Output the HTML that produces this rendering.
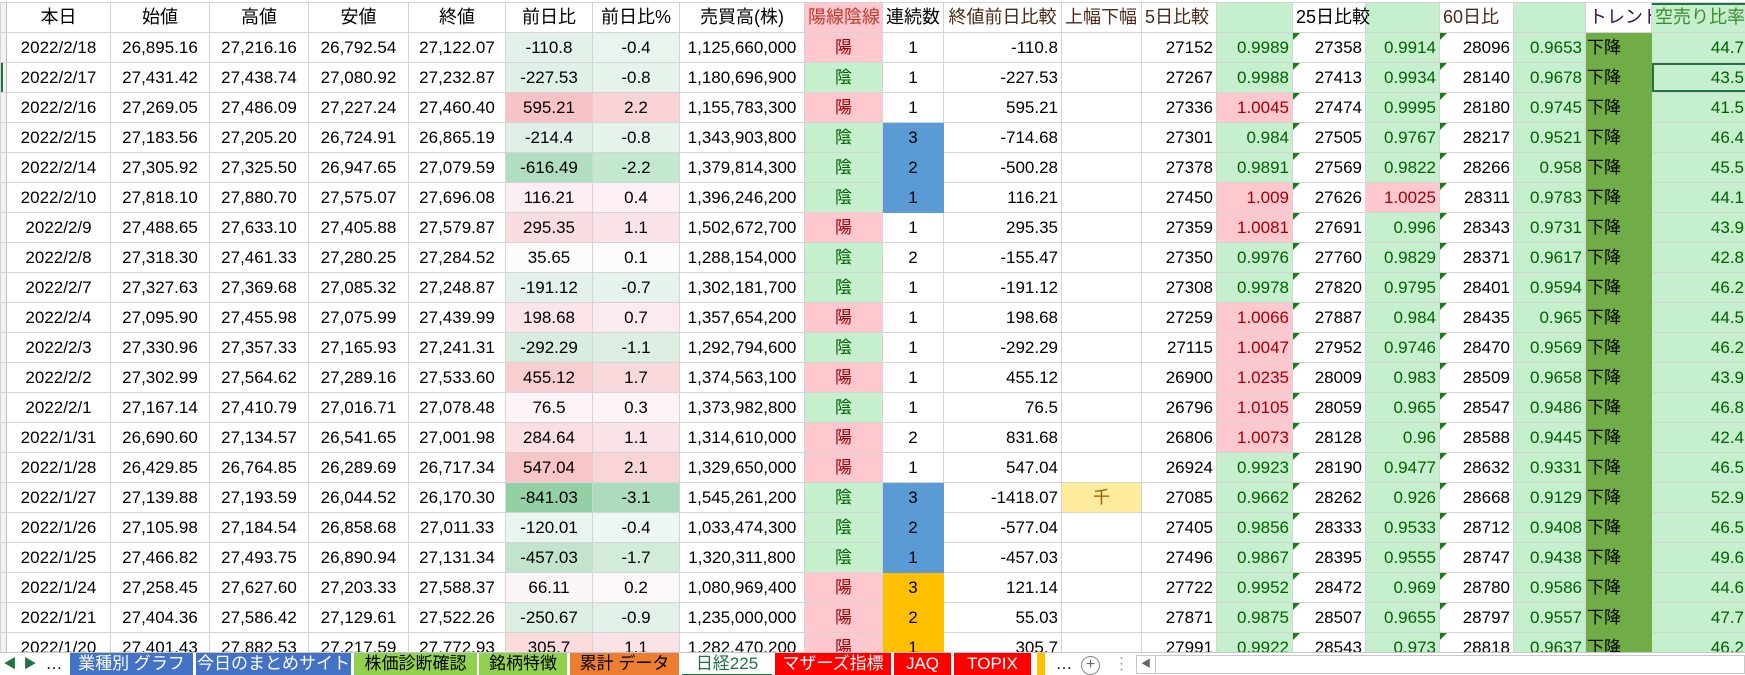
<!DOCTYPE html>
<html><head><meta charset="utf-8">
<style>
html,body{margin:0;padding:0;background:#fff;overflow:hidden;width:1745px;height:675px}
body{position:relative;font-family:"Liberation Sans","Noto Sans CJK JP",sans-serif;color:#000}
table{position:absolute;left:0;top:2px;border-collapse:collapse;table-layout:fixed;width:1747px}
td{border:1px solid #d4d4d4;height:29px;padding:0 3px;font-size:17px;text-align:center;white-space:nowrap;overflow:hidden;line-height:29px}
tr.h td{font-size:18px;height:29px}
td.x{background:#f2f2f2;border-right:1px solid #bdbdbd;padding:0}
.r{text-align:right}.l{text-align:left}
.p{background:#FFC7CE;color:#9C0006}
.g{background:#C6EFCE;color:#006100}
.b{background:#5B9BD5;border-color:#5B9BD5}
.o{background:#FFC000;border-color:#FFC000}
.tr{background:#70AD47;text-align:left;padding-left:1px;border-color:#70AD47}
.y{background:#FFEB9C;color:#9C5700}
.t{position:relative}
.t::before{content:"";position:absolute;left:0;top:0;border-top:7px solid #1a7d1a;border-right:7px solid transparent}
.br{color:#4a2a18}
.sel{box-shadow:inset 0 0 0 2px #217346}
#tabs{position:absolute;left:0;top:652px;width:1745px;height:23px;background:#fff;border-top:1px solid #c8c8c8}
.tab{position:absolute;top:0;height:23px;line-height:22px;font-size:17px;text-align:center;white-space:nowrap;overflow:hidden}
</style></head><body>
<table>
<colgroup><col style="width:6px"><col style="width:104px"><col style="width:99px"><col style="width:99px"><col style="width:100px"><col style="width:97px"><col style="width:87px"><col style="width:87px"><col style="width:125px"><col style="width:78px"><col style="width:61px"><col style="width:118px"><col style="width:80px"><col style="width:75px"><col style="width:76px"><col style="width:73px"><col style="width:74px"><col style="width:74px"><col style="width:72px"><col style="width:66px"><col style="width:96px"></colgroup>
<tr class="h"><td class="x"></td><td>本日</td><td>始値</td><td>高値</td><td>安値</td><td>終値</td><td>前日比</td><td>前日比%</td><td>売買高(株)</td><td class="p" style="color:#C0392B">陽線陰線</td><td>連続数</td><td class="br">終値前日比較</td><td class="br l">上幅下幅</td><td class="br l">5日比較</td><td class="g"></td><td class="l" style="overflow:visible">25日比較</td><td class="g"></td><td class="br l">60日比</td><td class="g"></td><td class="l" style="color:#3b1050">トレンド</td><td class="g l" style="color:#3c8a2e;box-shadow:inset 0 2px 0 #217346">空売り比率</td></tr>
<tr><td class="x"></td><td>2022/2/18</td><td>26,895.16</td><td>27,216.16</td><td>26,792.54</td><td>27,122.07</td><td style="background:#E3F1E8">-110.8</td><td style="background:#E8F4EC">-0.4</td><td>1,125,660,000</td><td class="p">陽</td><td>1</td><td class="r">-110.8</td><td></td><td class="r">27152</td><td class="g r">0.9989</td><td class="r t">27358</td><td class="g r">0.9914</td><td class="r t">28096</td><td class="g r">0.9653</td><td class="tr">下降</td><td class="g r">44.7</td></tr>
<tr><td class="x" style="box-shadow:inset 2px 0 0 #217346"></td><td>2022/2/17</td><td>27,431.42</td><td>27,438.74</td><td>27,080.92</td><td>27,232.87</td><td style="background:#E0F0E6">-227.53</td><td style="background:#E5F3EA">-0.8</td><td>1,180,696,900</td><td class="g">陰</td><td>1</td><td class="r">-227.53</td><td></td><td class="r">27267</td><td class="g r">0.9988</td><td class="r t">27413</td><td class="g r">0.9934</td><td class="r t">28140</td><td class="g r">0.9678</td><td class="tr">下降</td><td class="g r sel">43.5</td></tr>
<tr><td class="x"></td><td>2022/2/16</td><td>27,269.05</td><td>27,486.09</td><td>27,227.24</td><td>27,460.40</td><td style="background:#F8C3C6">595.21</td><td style="background:#F9D3D6">2.2</td><td>1,155,783,300</td><td class="p">陽</td><td>1</td><td class="r">595.21</td><td></td><td class="r">27336</td><td class="p r">1.0045</td><td class="r t">27474</td><td class="g r">0.9995</td><td class="r t">28180</td><td class="g r">0.9745</td><td class="tr">下降</td><td class="g r">41.5</td></tr>
<tr><td class="x"></td><td>2022/2/15</td><td>27,183.56</td><td>27,205.20</td><td>26,724.91</td><td>26,865.19</td><td style="background:#E1F0E7">-214.4</td><td style="background:#E5F3EA">-0.8</td><td>1,343,903,800</td><td class="g">陰</td><td class="b">3</td><td class="r">-714.68</td><td></td><td class="r">27301</td><td class="g r">0.984</td><td class="r t">27505</td><td class="g r">0.9767</td><td class="r t">28217</td><td class="g r">0.9521</td><td class="tr">下降</td><td class="g r">46.4</td></tr>
<tr><td class="x"></td><td>2022/2/14</td><td>27,305.92</td><td>27,325.50</td><td>26,947.65</td><td>27,079.59</td><td style="background:#B1DEC0">-616.49</td><td style="background:#C4E7CF">-2.2</td><td>1,379,814,300</td><td class="g">陰</td><td class="b">2</td><td class="r">-500.28</td><td></td><td class="r">27378</td><td class="g r">0.9891</td><td class="r t">27569</td><td class="g r">0.9822</td><td class="r t">28266</td><td class="g r">0.958</td><td class="tr">下降</td><td class="g r">45.5</td></tr>
<tr><td class="x"></td><td>2022/2/10</td><td>27,818.10</td><td>27,880.70</td><td>27,575.07</td><td>27,696.08</td><td style="background:#FCEFF1">116.21</td><td style="background:#FCF0F2">0.4</td><td>1,396,246,200</td><td class="g">陰</td><td class="b">1</td><td class="r">116.21</td><td></td><td class="r">27450</td><td class="p r">1.009</td><td class="r t">27626</td><td class="p r">1.0025</td><td class="r t">28311</td><td class="g r">0.9783</td><td class="tr">下降</td><td class="g r">44.1</td></tr>
<tr><td class="x"></td><td>2022/2/9</td><td>27,488.65</td><td>27,633.10</td><td>27,405.88</td><td>27,579.87</td><td style="background:#FADDE0">295.35</td><td style="background:#FAE3E6">1.1</td><td>1,502,672,700</td><td class="p">陽</td><td>1</td><td class="r">295.35</td><td></td><td class="r">27359</td><td class="p r">1.0081</td><td class="r t">27691</td><td class="g r">0.996</td><td class="r t">28343</td><td class="g r">0.9731</td><td class="tr">下降</td><td class="g r">43.9</td></tr>
<tr><td class="x"></td><td>2022/2/8</td><td>27,318.30</td><td>27,461.33</td><td>27,280.25</td><td>27,284.52</td><td style="background:#FDFAFC">35.65</td><td style="background:#FDFAFC">0.1</td><td>1,288,154,000</td><td class="g">陰</td><td>2</td><td class="r">-155.47</td><td></td><td class="r">27350</td><td class="g r">0.9976</td><td class="r t">27760</td><td class="g r">0.9829</td><td class="r t">28371</td><td class="g r">0.9617</td><td class="tr">下降</td><td class="g r">42.8</td></tr>
<tr><td class="x"></td><td>2022/2/7</td><td>27,327.63</td><td>27,369.68</td><td>27,085.32</td><td>27,248.87</td><td style="background:#E3F1E8">-191.12</td><td style="background:#E6F3EA">-0.7</td><td>1,302,181,700</td><td class="g">陰</td><td>1</td><td class="r">-191.12</td><td></td><td class="r">27308</td><td class="g r">0.9978</td><td class="r t">27820</td><td class="g r">0.9795</td><td class="r t">28401</td><td class="g r">0.9594</td><td class="tr">下降</td><td class="g r">46.2</td></tr>
<tr><td class="x"></td><td>2022/2/4</td><td>27,095.90</td><td>27,455.98</td><td>27,075.99</td><td>27,439.99</td><td style="background:#FBE5E8">198.68</td><td style="background:#FBEBEE">0.7</td><td>1,357,654,200</td><td class="p">陽</td><td>1</td><td class="r">198.68</td><td></td><td class="r">27259</td><td class="p r">1.0066</td><td class="r t">27887</td><td class="g r">0.984</td><td class="r t">28435</td><td class="g r">0.965</td><td class="tr">下降</td><td class="g r">44.5</td></tr>
<tr><td class="x"></td><td>2022/2/3</td><td>27,330.96</td><td>27,357.33</td><td>27,165.93</td><td>27,241.31</td><td style="background:#D8EDDF">-292.29</td><td style="background:#DDEFE3">-1.1</td><td>1,292,794,600</td><td class="g">陰</td><td>1</td><td class="r">-292.29</td><td></td><td class="r">27115</td><td class="p r">1.0047</td><td class="r t">27952</td><td class="g r">0.9746</td><td class="r t">28470</td><td class="g r">0.9569</td><td class="tr">下降</td><td class="g r">46.2</td></tr>
<tr><td class="x"></td><td>2022/2/2</td><td>27,302.99</td><td>27,564.62</td><td>27,289.16</td><td>27,533.60</td><td style="background:#F9CED1">455.12</td><td style="background:#FAD9DC">1.7</td><td>1,374,563,100</td><td class="p">陽</td><td>1</td><td class="r">455.12</td><td></td><td class="r">26900</td><td class="p r">1.0235</td><td class="r t">28009</td><td class="g r">0.983</td><td class="r t">28509</td><td class="g r">0.9658</td><td class="tr">下降</td><td class="g r">43.9</td></tr>
<tr><td class="x"></td><td>2022/2/1</td><td>27,167.14</td><td>27,410.79</td><td>27,016.71</td><td>27,078.48</td><td style="background:#FCF4F6">76.5</td><td style="background:#FCF4F6">0.3</td><td>1,373,982,800</td><td class="g">陰</td><td>1</td><td class="r">76.5</td><td></td><td class="r">26796</td><td class="p r">1.0105</td><td class="r t">28059</td><td class="g r">0.965</td><td class="r t">28547</td><td class="g r">0.9486</td><td class="tr">下降</td><td class="g r">46.8</td></tr>
<tr><td class="x"></td><td>2022/1/31</td><td>26,690.60</td><td>27,134.57</td><td>26,541.65</td><td>27,001.98</td><td style="background:#FADEE1">284.64</td><td style="background:#FAE3E6">1.1</td><td>1,314,610,000</td><td class="p">陽</td><td>2</td><td class="r">831.68</td><td></td><td class="r">26806</td><td class="p r">1.0073</td><td class="r t">28128</td><td class="g r">0.96</td><td class="r t">28588</td><td class="g r">0.9445</td><td class="tr">下降</td><td class="g r">42.4</td></tr>
<tr><td class="x"></td><td>2022/1/28</td><td>26,429.85</td><td>26,764.85</td><td>26,289.69</td><td>26,717.34</td><td style="background:#F8C6C9">547.04</td><td style="background:#F9D5D8">2.1</td><td>1,329,650,000</td><td class="p">陽</td><td>1</td><td class="r">547.04</td><td></td><td class="r">26924</td><td class="g r">0.9923</td><td class="r t">28190</td><td class="g r">0.9477</td><td class="r t">28632</td><td class="g r">0.9331</td><td class="tr">下降</td><td class="g r">46.5</td></tr>
<tr><td class="x"></td><td>2022/1/27</td><td>27,139.88</td><td>27,193.59</td><td>26,044.52</td><td>26,170.30</td><td style="background:#93D0A6">-841.03</td><td style="background:#ADDBBD">-3.1</td><td>1,545,261,200</td><td class="g">陰</td><td class="b">3</td><td class="r">-1418.07</td><td class="y">千</td><td class="r">27085</td><td class="g r">0.9662</td><td class="r t">28262</td><td class="g r">0.926</td><td class="r t">28668</td><td class="g r">0.9129</td><td class="tr">下降</td><td class="g r">52.9</td></tr>
<tr><td class="x"></td><td>2022/1/26</td><td>27,105.98</td><td>27,184.54</td><td>26,858.68</td><td>27,011.33</td><td style="background:#EAF5EF">-120.01</td><td style="background:#EDF6F1">-0.4</td><td>1,033,474,300</td><td class="g">陰</td><td class="b">2</td><td class="r">-577.04</td><td></td><td class="r">27405</td><td class="g r">0.9856</td><td class="r t">28333</td><td class="g r">0.9533</td><td class="r t">28712</td><td class="g r">0.9408</td><td class="tr">下降</td><td class="g r">46.5</td></tr>
<tr><td class="x"></td><td>2022/1/25</td><td>27,466.82</td><td>27,493.75</td><td>26,890.94</td><td>27,131.34</td><td style="background:#C2E4CD">-457.03</td><td style="background:#D3EBDB">-1.7</td><td>1,320,311,800</td><td class="g">陰</td><td class="b">1</td><td class="r">-457.03</td><td></td><td class="r">27496</td><td class="g r">0.9867</td><td class="r t">28395</td><td class="g r">0.9555</td><td class="r t">28747</td><td class="g r">0.9438</td><td class="tr">下降</td><td class="g r">49.6</td></tr>
<tr><td class="x"></td><td>2022/1/24</td><td>27,258.45</td><td>27,627.60</td><td>27,203.33</td><td>27,588.37</td><td style="background:#FCF5F7">66.11</td><td style="background:#FCF7F9">0.2</td><td>1,080,969,400</td><td class="p">陽</td><td class="o">3</td><td class="r">121.14</td><td></td><td class="r">27722</td><td class="g r">0.9952</td><td class="r t">28472</td><td class="g r">0.969</td><td class="r t">28780</td><td class="g r">0.9586</td><td class="tr">下降</td><td class="g r">44.6</td></tr>
<tr><td class="x"></td><td>2022/1/21</td><td>27,404.36</td><td>27,586.42</td><td>27,129.61</td><td>27,522.26</td><td style="background:#DCEFE2">-250.67</td><td style="background:#E2F1E7">-0.9</td><td>1,235,000,000</td><td class="p">陽</td><td class="o">2</td><td class="r">55.03</td><td></td><td class="r">27871</td><td class="g r">0.9875</td><td class="r t">28507</td><td class="g r">0.9655</td><td class="r t">28797</td><td class="g r">0.9557</td><td class="tr">下降</td><td class="g r">47.7</td></tr>
<tr><td class="x"></td><td>2022/1/20</td><td>27,401.43</td><td>27,882.53</td><td>27,217.59</td><td>27,772.93</td><td style="background:#FADCDF">305.7</td><td style="background:#FAE3E6">1.1</td><td>1,282,470,200</td><td class="p">陽</td><td class="o">1</td><td class="r">305.7</td><td></td><td class="r">27991</td><td class="g r">0.9922</td><td class="r t">28543</td><td class="g r">0.973</td><td class="r t">28818</td><td class="g r">0.9637</td><td class="tr">下降</td><td class="g r">46.2</td></tr>
</table>
<div id="tabs">
<div class="tab" style="left:0;width:20px;color:#217346;font-size:13px">◀</div>
<div class="tab" style="left:20px;width:20px;color:#217346;font-size:13px">▶</div>
<div class="tab" style="left:42px;width:24px">…</div>
<div class="tab" style="left:70px;width:123px;background:#4472C4;color:#fff">業種別 グラフ</div>
<div class="tab" style="left:196px;width:155px;background:#4472C4;color:#fff">今日のまとめサイト</div>
<div class="tab" style="left:354px;width:123px;background:#92D050">株価診断確認</div>
<div class="tab" style="left:479px;width:88px;background:#92D050">銘柄特徴</div>
<div class="tab" style="left:570px;width:109px;background:#ED7D31">累計 データ</div>
<div class="tab" style="left:682px;width:90px;background:#fff;color:#217346;border-bottom:2px solid #217346;box-sizing:border-box;height:23px">日経225</div>
<div class="tab" style="left:775px;width:116px;background:#FF0000;color:#fff">マザーズ指標</div>
<div class="tab" style="left:894px;width:57px;background:#FF0000;color:#fff">JAQ</div>
<div class="tab" style="left:954px;width:77px;background:#FF0000;color:#fff">TOPIX</div>
<div class="tab" style="left:1037px;width:8px;background:#FFC000"></div>
<div class="tab" style="left:1052px;width:24px">…</div>
<div class="tab" style="left:1081px;top:3px;width:17px;height:17px;line-height:16px;border:1px solid #888;border-radius:50%;color:#666;font-size:16px">+</div>
<div class="tab" style="left:1113px;width:10px;color:#aaa">⋮</div>
<div style="position:absolute;left:1136px;top:2px;width:609px;height:19px;border:1px solid #c8c8c8;box-sizing:border-box;background:#fff"><div style="position:absolute;left:0;top:0;width:18px;height:17px;border-right:1px solid #c8c8c8;color:#666;font-size:10px;line-height:17px;text-align:center">◀</div></div>
</div>
</body></html>
